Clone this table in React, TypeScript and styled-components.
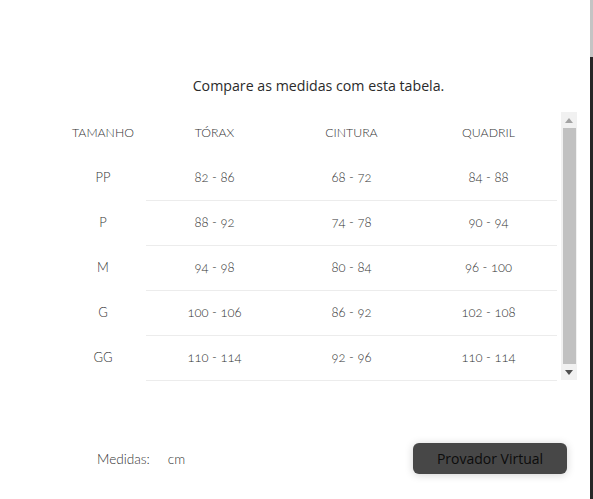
import React from "react";
import styled, { createGlobalStyle } from "styled-components";

const Global = createGlobalStyle`
  html, body { margin: 0; padding: 0; background: #fff; }
  body { width: 593px; height: 499px; overflow: hidden; }
`;

const Page = styled.div`
  display: flex;
  width: 593px;
  height: 499px;
`;

const Main = styled.div`
  flex: 1;
  display: flex;
  flex-direction: column;
  padding-top: 76px;
`;

const EdgeBar = styled.div`
  width: 3px;
  display: flex;
  flex-direction: column;
  background: #262626;
`;

const EdgeThumb = styled.div`
  height: 57px;
  background: #c4c4c4;
`;

const Block = styled.div`
  margin-left: 60px;
  margin-right: 13px;
  display: flex;
  flex-direction: column;
`;

const Title = styled.h2`
  margin: 0 0 16px;
  height: 20px;
  line-height: 20px;
  text-align: center;
  font-family: "Open Sans", "Noto Sans", sans-serif;
  font-weight: 400;
  font-size: 14.2px;
  color: #2a2a2a;
`;

const Scroller = styled.div`
  display: flex;
  height: 268px;
`;

const Table = styled.div`
  flex: 1;
  padding-right: 4px;
  font-family: "Lato", "Noto Sans", sans-serif;
  font-weight: 300;
  font-variant-numeric: oldstyle-nums;
  color: #333;
`;

const Row = styled.div<{ $head?: boolean }>`
  display: grid;
  grid-template-columns: 86px repeat(3, 1fr);
  height: ${(p) => (p.$head ? "44px" : "45px")};
`;

const Cell = styled.div<{ $head?: boolean; $line?: boolean }>`
  display: flex;
  align-items: center;
  justify-content: center;
  font-size: ${(p) => (p.$head ? "12.3px" : "13px")};
  padding-bottom: ${(p) => (p.$head ? "2px" : "2px")};
  border-bottom: 1px solid ${(p) => (p.$line ? "#ececec" : "transparent")};
`;

const ScrollTrack = styled.div`
  width: 16px;
  background: #f1f1f1;
  display: flex;
  flex-direction: column;
  align-items: center;
`;

const ArrowBox = styled.div`
  height: 16px;
  width: 16px;
  display: flex;
  align-items: center;
  justify-content: center;
`;

const Thumb = styled.div`
  flex: 1;
  width: 13px;
  background: #c1c1c1;
`;

const Footer = styled.div`
  margin-top: 63px;
  height: 31px;
  display: flex;
  align-items: center;
  padding-left: 97px;
  padding-right: 23px;
`;

const Label = styled.span`
  font-family: "Lato", "Noto Sans", sans-serif;
  font-weight: 300;
  font-size: 13.6px;
  color: #333;
  margin-right: 18px;
`;

const Spacer = styled.div`
  flex: 1;
`;

const Button = styled.button`
  width: 154px;
  height: 31px;
  border: none;
  border-radius: 6px;
  background: #474747;
  color: #0c0c0c;
  font-family: "Open Sans", "Noto Sans", sans-serif;
  font-size: 14px;
  padding: 0;
  box-shadow: 0 1px 8px rgba(0, 0, 0, 0.18);
`;

const heads = ["TAMANHO", "TÓRAX", "CINTURA", "QUADRIL"];
const rows = [
  ["PP", "82 - 86", "68 - 72", "84 - 88"],
  ["P", "88 - 92", "74 - 78", "90 - 94"],
  ["M", "94 - 98", "80 - 84", "96 - 100"],
  ["G", "100 - 106", "86 - 92", "102 - 108"],
  ["GG", "110 - 114", "92 - 96", "110 - 114"],
];

export default function App() {
  return (
    <>
      <Global />
      <Page>
        <Main>
          <Block>
            <Title>Compare as medidas com esta tabela.</Title>
            <Scroller>
              <Table>
                <Row $head>
                  {heads.map((h) => (
                    <Cell key={h} $head>
                      {h}
                    </Cell>
                  ))}
                </Row>
                {rows.map((r) => (
                  <Row key={r[0]}>
                    {r.map((c, i) => (
                      <Cell key={i} $line={i > 0}>
                        {c}
                      </Cell>
                    ))}
                  </Row>
                ))}
              </Table>
              <ScrollTrack>
                <ArrowBox>
                  <svg width="8" height="5" viewBox="0 0 8 5">
                    <path d="M0 5 L4 0 L8 5 Z" fill="#a3a3a3" />
                  </svg>
                </ArrowBox>
                <Thumb />
                <ArrowBox>
                  <svg width="8" height="5" viewBox="0 0 8 5">
                    <path d="M0 0 L4 5 L8 0 Z" fill="#505050" />
                  </svg>
                </ArrowBox>
              </ScrollTrack>
            </Scroller>
          </Block>
          <Footer>
            <Label>Medidas:</Label>
            <Label>cm</Label>
            <Spacer />
            <Button>Provador Virtual</Button>
          </Footer>
        </Main>
        <EdgeBar>
          <EdgeThumb />
        </EdgeBar>
      </Page>
    </>
  );
}
